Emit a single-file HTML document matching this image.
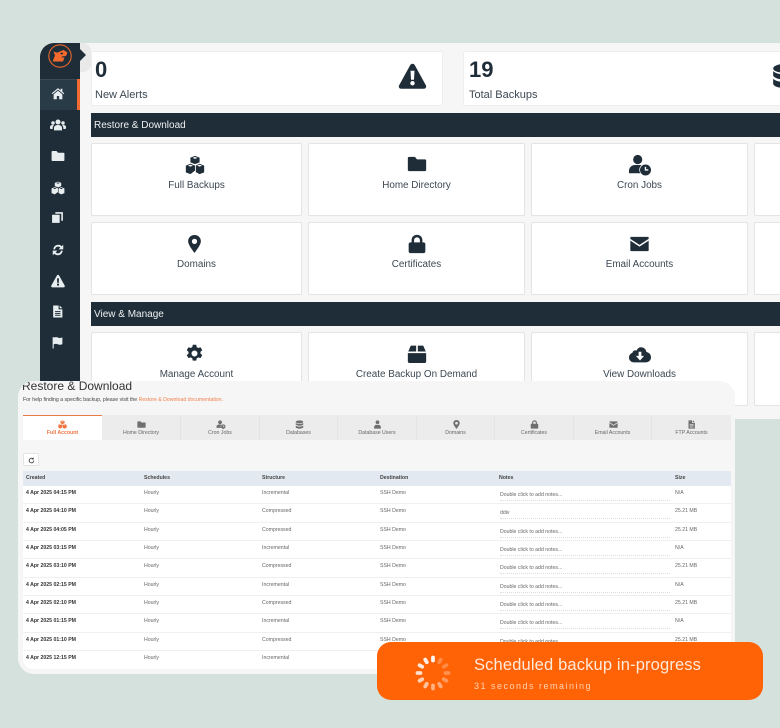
<!DOCTYPE html>
<html><head><meta charset="utf-8"><style>
html,body{margin:0;padding:0}
body{width:780px;height:728px;overflow:hidden;background:#d5e1dd;position:relative;font-family:"Liberation Sans",sans-serif}
div,span,svg{position:absolute}
svg{fill:#1f2d38;overflow:visible}
.side svg{fill:#e8edef}
#main{left:40px;top:43px;width:740px;height:376px;background:#f6f6f6;border-radius:14px 0 0 14px;overflow:hidden;filter:blur(.3px)}
.card{background:#fff;border:1px solid #e4e4e4;border-radius:2px;box-sizing:border-box}
.lbl{left:0;right:0;text-align:center;font-size:9.9px;line-height:12px;color:#3c4853;white-space:nowrap}
.bar{background:#1f2d38;color:#eef1f2;font-size:10px;line-height:25px;height:24px;box-sizing:border-box;padding-left:3px}
#p2{left:18px;top:381px;width:717px;height:293px;background:#f6f6f6;border-radius:16px;overflow:hidden;filter:blur(.35px)}
.tab{top:34px;height:25px;background:#ececec;border-right:1px solid #e4e4e4;box-sizing:border-box;font-size:5.2px;color:#666;text-align:center}
.tab span{left:0;right:0;top:15px;line-height:7px;white-space:nowrap}
.tab svg{fill:#6f6f6f}
.row{left:5px;width:708px;height:18.35px;background:#fff;border-bottom:1px solid #efefef;box-sizing:border-box;font-size:5.2px;line-height:7px;color:#666;white-space:nowrap}
.row span{top:4px}
.row .c{left:3px;font-weight:bold;color:#333}
.row .s{left:121px}.row .t{left:239px}.row .d{left:357px}
.row .n{left:477px;top:6px;width:170px;height:8px;border-bottom:1px dotted #ddd}
.row .z{left:652px}
</style></head><body>
<svg width="0" height="0" style="position:absolute"><defs>
<symbol id="warn" viewBox="0 0 24 24"><path fill-rule="evenodd" d="M12 1.500c.8 0 1.500.4 1.900 1.100l9.600 17.400c.7 1.300-.2 2.900-1.800 2.900H2.300C.7 22.900-.2 21.300.5 20L10.100 2.600C10.500 1.900 11.200 1.500 12 1.500zM10.300 7.500l.4 7.700h2.600l.4-7.700zM12 16.300a1.900 1.900 0 1 0 0 3.800 1.900 1.900 0 0 0 0-3.800z"/></symbol>
<symbol id="home" viewBox="0 0 24 24"><path d="M12 4.500 2.500 12.300l-1.300-1.500L12 2l4.500 3.700V3h3v5.200l3.300 2.600-1.300 1.500zM12 6.500l7.500 6.200V21h-5.500v-5.500h-4V21H4.500v-8.300z"/></symbol>
<symbol id="users" viewBox="0 0 24 24"><circle cx="12" cy="7.500" r="3.800"/><circle cx="4.500" cy="9" r="2.600"/><circle cx="19.500" cy="9" r="2.600"/><path d="M6 20v-3.500C6 13.500 8.500 12 12 12s6 1.500 6 4.500V20zM0 17v-2c0-2 1.500-3 4.500-3 .6 0 1.100 0 1.500.2-1.300 1-2 2.500-2 4.300V18H1zM24 17v-2c0-2-1.500-3-4.500-3-.6 0-1.100 0-1.500.2 1.300 1 2 2.500 2 4.300V18h3z"/></symbol>
<symbol id="folder" viewBox="0 0 24 24"><path d="M2.500 3.500h7l2.500 3h9.500c.9 0 1.500.6 1.500 1.500v11c0 .9-.6 1.500-1.500 1.500h-19C1.600 20.500 1 19.900 1 19V5c0-.9.6-1.500 1.500-1.500z"/></symbol>
<symbol id="cubes" viewBox="0 0 24 24"><path fill-rule="evenodd" d="M12 1l5.500 2.200v5.600l-5.500 2.200-5.500-2.200V3.200zM9 3.500l3 1.200 3-1.200-3-1.100zM6.500 10.500 12 12.700v6.100L6.500 23 1 20.800v-8.100zM3.500 12.800l3 1.200 3-1.200-3-1.100zM17.500 10.500l5.500 2.200v8.100L17.500 23 13 20.500v-7.800zM14.500 12.800l3 1.200 3-1.200-3-1.100z"/></symbol>
<symbol id="copy" viewBox="0 0 24 24"><path d="M8 2h14v16h-3V5H8z"/><path d="M2 7h14v15H2z"/></symbol>
<symbol id="sync" viewBox="0 0 24 24"><path d="M4 11C4.500 6 8 3 12.300 3c2.500 0 4.500 1 6 2.500L21 3v8h-8l3-3c-1-1-2.300-1.700-3.800-1.700-2.700 0-4.700 1.800-5.200 4.700zM20 13c-.5 5-4 8-8.300 8-2.500 0-4.500-1-6-2.500L3 21v-8h8l-3 3c1 1 2.300 1.700 3.800 1.700 2.700 0 4.700-1.800 5.200-4.700z"/></symbol>
<symbol id="file" viewBox="0 0 24 24"><path fill-rule="evenodd" d="M4 1h10v7h7v15H4zM16 1l5 5h-5zM7.500 11v1.800h10V11zM7.500 14.500v1.800h10v-1.800zM7.500 18v1.800h10V18z"/></symbol>
<symbol id="flag" viewBox="0 0 24 24"><path d="M3 2h2v1c3-1.500 6-1 8 0s5 1 8-.5V15c-3 1.500-6 1.500-8 .5s-5-1.500-8 0V23H3z"/></symbol>
<symbol id="pin" viewBox="0 0 24 24"><path fill-rule="evenodd" d="M12 0c5 0 8.500 3.700 8.500 8.300C20.500 13 15 19.500 12 24 9 19.500 3.500 13 3.500 8.300 3.500 3.700 7 0 12 0zm0 5a3.500 3.500 0 1 0 0 7 3.500 3.500 0 0 0 0-7z"/></symbol>
<symbol id="lock" viewBox="0 0 24 24"><path fill-rule="evenodd" d="M12 1c3.900 0 6.500 2.700 6.500 6.500V10H20c1 0 2 .9 2 2v9c0 1.100-1 2-2 2H4c-1 0-2-.9-2-2v-9c0-1.100 1-2 2-2h1.500V7.500C5.500 3.700 8.100 1 12 1zm0 3C9.800 4 8.500 5.500 8.500 7.500V10h7V7.500C15.500 5.500 14.200 4 12 4z"/></symbol>
<symbol id="mail" viewBox="0 0 24 24"><path d="M2 3.500h20c.6 0 1 .4 1 1v1.300L12 13 1 5.800V4.500c0-.6.4-1 1-1zM1 8l11 7.200L23 8v11.500c0 .6-.4 1-1 1H2c-.6 0-1-.4-1-1z"/></symbol>
<symbol id="gear" viewBox="0 0 24 24"><path fill-rule="evenodd" d="M9.800 1h4.400l.6 3c.7.300 1.300.6 1.900 1.100l2.900-1 2.200 3.800-2.300 2c.1.700.1 1.500 0 2.200l2.300 2-2.200 3.800-2.900-1c-.6.500-1.200.8-1.900 1.100l-.6 3H9.800l-.6-3c-.7-.3-1.300-.6-1.900-1.100l-2.900 1-2.200-3.800 2.300-2c-.1-.7-.1-1.500 0-2.200l-2.300-2 2.200-3.800 2.900 1c.6-.5 1.200-.8 1.900-1.100zM12 8.200a3.800 3.800 0 1 0 0 7.600 3.800 3.800 0 0 0 0-7.600z"/></symbol>
<symbol id="box" viewBox="0 0 24 24"><path d="M4.500 2h6.500v7H1.500zM13 2h6.500L22.500 9H13zM1 11h22v10c0 1-.8 1.800-1.800 1.800H2.800C1.800 22.800 1 22 1 21z"/></symbol>
<symbol id="cloud" viewBox="0 0 24 24"><path fill-rule="evenodd" d="M13 3.500c3.200 0 5.600 2.200 6 5.200 2.800.5 5 2.700 5 5.700 0 3.300-2.600 5.600-5.800 5.600H5.500C2.400 20 0 17.700 0 14.800c0-2.400 1.500-4.400 3.700-5.100.2-1.600 1.700-2.700 3.300-2.700.4 0 .8.100 1.200.2C9.300 5 10.900 3.500 13 3.500zM10.500 8.500v4.500H7.500l4.500 5 4.500-5h-3V8.500z"/></symbol>
<symbol id="uclock" viewBox="0 0 24 24"><circle cx="9.500" cy="6" r="5"/><path d="M0 21v-2.500C0 14.500 3 12 7 12h5c.5 0 1 .1 1.500.2-1.500 1.500-2.300 3.200-2.300 5 0 1.500.5 2.800 1.300 3.800z"/><path fill-rule="evenodd" d="M18 11.500a6 6 0 1 1 0 12 6 6 0 0 1 0-12zM17.200 14v4.200h3.800v-1.500h-2.300V14z"/></symbol>
<symbol id="db" viewBox="0 0 24 24"><ellipse cx="12" cy="5" rx="10" ry="4"/><path d="M2 7.500c2 2 6 3 10 3s8-1 10-3V12c-2 2.300-6 3.200-10 3.200S4 14.300 2 12zM2 14.500c2 2 6 3 10 3s8-1 10-3V19c0 2.200-4.500 4-10 4S2 21.200 2 19z"/></symbol>
<symbol id="utie" viewBox="0 0 24 24"><circle cx="12" cy="6" r="5"/><path d="M3 23v-4c0-3.500 3-6 6-6h6c3 0 6 2.500 6 6v4z"/></symbol>
</defs></svg>

<div id="main">
 <div class="side" style="left:0;top:0;width:40px;height:376px;background:#1f2d38">
  <div style="left:0;top:36px;width:40px;height:31px;background:#2a3b48;border-top:1px solid #3a4955;box-sizing:border-box"></div>
  <div style="left:37px;top:36px;width:3px;height:31px;background:#f26a2e"></div>
  <svg style="left:8px;top:1px" width="24" height="24" viewBox="0 0 24 24"><circle cx="12" cy="12" r="11.200" fill="none" stroke="#e8682c" stroke-width="1.100"/><path fill="#f26a2e" d="M4.500 17.500l2.500-6L5.500 7.500l3.500 1.200 6.500-2.700 4 2.500-1.500 3.500-4 .5-.5 1h3L15 17.500H9z"/><path fill="#1f2d38" d="M12.500 8.800h2.500v1.400h-2.500z"/></svg>
  <svg style="left:11px;top:44px;width:14px;height:14px"><use href="#home"/></svg>
  <svg style="left:9.500px;top:73.500px;width:16px;height:16px"><use href="#users"/></svg>
  <svg style="left:11px;top:106px;width:14px;height:14px"><use href="#folder"/></svg>
  <svg style="left:11px;top:137.500px;width:14px;height:14px"><use href="#cubes"/></svg>
  <svg style="left:11px;top:168px;width:13px;height:13px"><use href="#copy"/></svg>
  <svg style="left:11px;top:200px;width:14px;height:14px"><use href="#sync"/></svg>
  <svg style="left:11px;top:231px;width:14px;height:14px"><use href="#warn"/></svg>
  <svg style="left:11px;top:262px;width:13px;height:13px"><use href="#file"/></svg>
  <svg style="left:11px;top:293px;width:13px;height:13px"><use href="#flag"/></svg>
 </div>
 <div style="left:40px;top:0;width:11px;height:29px;background:#e9e9e9;border-radius:0 8px 8px 0"></div>
 <svg style="left:40px;top:6px" width="7" height="12" viewBox="0 0 7 12"><path d="M0 0l6 6-6 6z"/></svg>

 <div class="card" style="left:51px;top:8px;width:352px;height:55px;border-color:#eee">
  <span style="left:3px;top:6px;font-size:22px;font-weight:bold;line-height:24px;color:#1f2d38">0</span>
  <span style="left:3px;top:37px;font-size:11px;line-height:13px;color:#3c4853;white-space:nowrap">New Alerts</span>
  <svg style="left:306px;top:10px;width:29px;height:28px"><use href="#warn"/></svg>
 </div>
 <div class="card" style="left:423px;top:8px;width:340px;height:55px;border-color:#eee">
  <span style="left:5px;top:6px;font-size:22px;font-weight:bold;line-height:24px;color:#1f2d38">19</span>
  <span style="left:5px;top:37px;font-size:11px;line-height:13px;color:#3c4853;white-space:nowrap">Total Backups</span>
  <svg style="left:307px;top:10px;width:26px;height:28px"><use href="#db"/></svg>
 </div>

 <div class="bar" style="left:51px;top:70px;width:689px">Restore &amp; Download</div>
 <div class="bar" style="left:51px;top:259px;width:689px">View &amp; Manage</div>

 <div class="card" style="left:51px;top:100px;width:211px;height:73px"><svg style="left:93px;top:11px;width:20px;height:20px"><use href="#cubes"/></svg><span class="lbl" style="top:36px">Full Backups</span></div>
 <div class="card" style="left:268px;top:100px;width:217px;height:73px"><svg style="left:98px;top:10px;width:20px;height:20px"><use href="#folder"/></svg><span class="lbl" style="top:36px">Home Directory</span></div>
 <div class="card" style="left:491px;top:100px;width:217px;height:73px"><svg style="left:96px;top:10px;width:24px;height:22px"><use href="#uclock"/></svg><span class="lbl" style="top:36px">Cron Jobs</span></div>
 <div class="card" style="left:714px;top:100px;width:60px;height:73px"></div>

 <div class="card" style="left:51px;top:179px;width:211px;height:73px"><svg style="left:93px;top:12px;width:19px;height:18px"><use href="#pin"/></svg><span class="lbl" style="top:36px">Domains</span></div>
 <div class="card" style="left:268px;top:179px;width:217px;height:73px"><svg style="left:98px;top:11px;width:20px;height:20px"><use href="#lock"/></svg><span class="lbl" style="top:36px">Certificates</span></div>
 <div class="card" style="left:491px;top:179px;width:217px;height:73px"><svg style="left:97px;top:11px;width:21px;height:20px"><use href="#mail"/></svg><span class="lbl" style="top:36px">Email Accounts</span></div>
 <div class="card" style="left:714px;top:179px;width:60px;height:73px"></div>

 <div class="card" style="left:51px;top:289px;width:211px;height:74px"><svg style="left:93px;top:11px;width:19px;height:19px"><use href="#gear"/></svg><span class="lbl" style="top:36px">Manage Account</span></div>
 <div class="card" style="left:268px;top:289px;width:217px;height:74px"><svg style="left:98px;top:11px;width:20px;height:20px"><use href="#box"/></svg><span class="lbl" style="top:36px">Create Backup On Demand</span></div>
 <div class="card" style="left:491px;top:289px;width:217px;height:74px"><svg style="left:96px;top:11px;width:24px;height:22px"><use href="#cloud"/></svg><span class="lbl" style="top:36px">View Downloads</span></div>
 <div class="card" style="left:714px;top:289px;width:60px;height:74px"></div>
</div>

<div id="p2">
 <span style="left:4px;top:-2px;font-size:12px;line-height:15px;color:#333;white-space:nowrap">Restore &amp; Download</span>
 <span style="left:5px;top:15px;font-size:5.200px;line-height:8px;color:#444;white-space:nowrap">For help finding a specific backup, please visit the <b style="font-weight:normal;color:#f0804e">Restore &amp; Download documentation.</b></span>

 <div class="tab" style="left:5px;width:79px;background:#fff;border-top:1.500px solid #ea7a45;border-right:0;color:#ef7440;font-weight:bold"><svg style="left:35px;top:4px;width:9px;height:9px;fill:#ef7440"><use href="#cubes"/></svg><span style="top:14px">Full Account</span></div>
 <div class="tab" style="left:84px;width:79px"><svg style="left:35px;top:5px;width:9px;height:9px"><use href="#folder"/></svg><span>Home Directory</span></div>
 <div class="tab" style="left:163px;width:79px"><svg style="left:35px;top:5px;width:10px;height:9px"><use href="#uclock"/></svg><span>Cron Jobs</span></div>
 <div class="tab" style="left:242px;width:78px"><svg style="left:35px;top:5px;width:9px;height:9px"><use href="#db"/></svg><span>Databases</span></div>
 <div class="tab" style="left:320px;width:79px"><svg style="left:35px;top:5px;width:9px;height:9px"><use href="#utie"/></svg><span>Database Users</span></div>
 <div class="tab" style="left:399px;width:78px"><svg style="left:35px;top:5px;width:9px;height:9px"><use href="#pin"/></svg><span>Domains</span></div>
 <div class="tab" style="left:477px;width:79px"><svg style="left:35px;top:5px;width:9px;height:9px"><use href="#lock"/></svg><span>Certificates</span></div>
 <div class="tab" style="left:556px;width:78px"><svg style="left:35px;top:5px;width:9px;height:9px"><use href="#mail"/></svg><span>Email Accounts</span></div>
 <div class="tab" style="left:634px;width:79px;border-right:0"><svg style="left:35px;top:5px;width:9px;height:9px"><use href="#file"/></svg><span>FTP Accounts</span></div>

 <div style="left:5px;top:72px;width:16px;height:13px;background:#fff;border:1px solid #e4e4e4;border-radius:2px;box-sizing:border-box"><svg style="left:4px;top:2.500px;width:7px;height:7px" viewBox="0 0 24 24"><path fill="none" stroke="#444" stroke-width="3" d="M20 12a8 8 0 1 1-2.500-5.800M18 2v5h-5"/></svg></div>

 <div style="left:5px;top:90px;width:708px;height:15px;background:#e3e9f0;font-size:5.200px;font-weight:bold;line-height:15px;color:#444;white-space:nowrap">
  <span style="left:3px">Created</span><span style="left:121px">Schedules</span><span style="left:239px">Structure</span><span style="left:357px">Destination</span><span style="left:476px">Notes</span><span style="left:652px">Size</span>
 </div>
 <div class="row" style="top:105px"><span class="c">4 Apr 2025 04:15 PM</span><span class="s">Hourly</span><span class="t">Incremental</span><span class="d">SSH Demo</span><span class="n">Double click to add notes...</span><span class="z">N/A</span></div>
 <div class="row" style="top:123.350px"><span class="c">4 Apr 2025 04:10 PM</span><span class="s">Hourly</span><span class="t">Compressed</span><span class="d">SSH Demo</span><span class="n">ddiv</span><span class="z">25.21 MB</span></div>
 <div class="row" style="top:141.700px"><span class="c">4 Apr 2025 04:05 PM</span><span class="s">Hourly</span><span class="t">Compressed</span><span class="d">SSH Demo</span><span class="n">Double click to add notes...</span><span class="z">25.21 MB</span></div>
 <div class="row" style="top:160.050px"><span class="c">4 Apr 2025 03:15 PM</span><span class="s">Hourly</span><span class="t">Incremental</span><span class="d">SSH Demo</span><span class="n">Double click to add notes...</span><span class="z">N/A</span></div>
 <div class="row" style="top:178.400px"><span class="c">4 Apr 2025 03:10 PM</span><span class="s">Hourly</span><span class="t">Compressed</span><span class="d">SSH Demo</span><span class="n">Double click to add notes...</span><span class="z">25.21 MB</span></div>
 <div class="row" style="top:196.750px"><span class="c">4 Apr 2025 02:15 PM</span><span class="s">Hourly</span><span class="t">Incremental</span><span class="d">SSH Demo</span><span class="n">Double click to add notes...</span><span class="z">N/A</span></div>
 <div class="row" style="top:215.100px"><span class="c">4 Apr 2025 02:10 PM</span><span class="s">Hourly</span><span class="t">Compressed</span><span class="d">SSH Demo</span><span class="n">Double click to add notes...</span><span class="z">25.21 MB</span></div>
 <div class="row" style="top:233.450px"><span class="c">4 Apr 2025 01:15 PM</span><span class="s">Hourly</span><span class="t">Incremental</span><span class="d">SSH Demo</span><span class="n">Double click to add notes...</span><span class="z">N/A</span></div>
 <div class="row" style="top:251.800px"><span class="c">4 Apr 2025 01:10 PM</span><span class="s">Hourly</span><span class="t">Compressed</span><span class="d">SSH Demo</span><span class="n">Double click to add notes...</span><span class="z">25.21 MB</span></div>
 <div class="row" style="top:270.150px;height:18.350px;border-bottom:0;border-radius:0 0 0 10px"><span class="c">4 Apr 2025 12:15 PM</span><span class="s">Hourly</span><span class="t">Incremental</span></div>
</div>

<div style="left:377px;top:642px;width:386px;height:58px;background:#ff6305;border-radius:14px">
 <svg style="left:38px;top:13px" width="36" height="36" viewBox="-18 -18 36 36" fill="none" stroke-width="3.800" stroke-linecap="round">
  <g stroke="#fff">
   <path opacity=".95" d="M0-12.500v-3"/>
   <path opacity=".25" d="M0-12.500v-3" transform="rotate(30)"/>
   <path opacity=".25" d="M0-12.500v-3" transform="rotate(60)"/>
   <path opacity=".3" d="M0-12.500v-3" transform="rotate(90)"/>
   <path opacity=".35" d="M0-12.500v-3" transform="rotate(120)"/>
   <path opacity=".45" d="M0-12.500v-3" transform="rotate(150)"/>
   <path opacity=".5" d="M0-12.500v-3" transform="rotate(180)"/>
   <path opacity=".6" d="M0-12.500v-3" transform="rotate(210)"/>
   <path opacity=".7" d="M0-12.500v-3" transform="rotate(240)"/>
   <path opacity=".8" d="M0-12.500v-3" transform="rotate(270)"/>
   <path opacity=".85" d="M0-12.500v-3" transform="rotate(300)"/>
   <path opacity=".9" d="M0-12.500v-3" transform="rotate(330)"/>
  </g>
 </svg>
 <span style="left:97px;top:13px;font-size:16.500px;line-height:20px;color:#ffe9da;white-space:nowrap;letter-spacing:.15px">Scheduled backup in-progress</span>
 <span style="left:97px;top:38px;font-size:9px;line-height:12px;color:#ffd3b6;white-space:nowrap;letter-spacing:1.500px">31 seconds remaining</span>
</div>
</body></html>
